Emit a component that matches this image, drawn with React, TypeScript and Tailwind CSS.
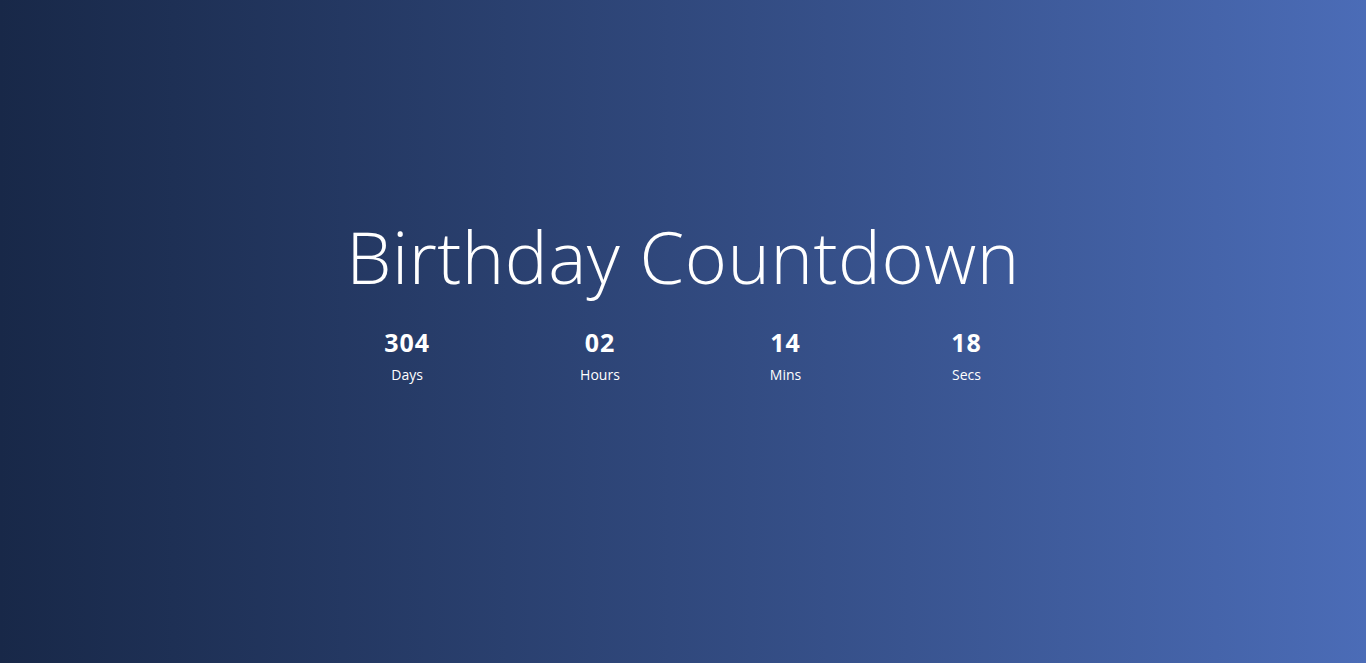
const parts = [
  { value: '304', label: 'Days' },
  { value: '02', label: 'Hours' },
  { value: '14', label: 'Mins' },
  { value: '18', label: 'Secs' },
];

export default function App() {
  return (
    <div
      className="flex h-[663px] w-full flex-col items-center justify-center bg-gradient-to-r from-[#182848] to-[#4b6cb7] pb-[62px] text-white"
      style={{ fontFamily: '"Open Sans", "Liberation Sans", sans-serif' }}
    >
      <h1 className="text-[72px] font-light leading-none tracking-[0.5px]">Birthday Countdown</h1>
      <div className="mt-[38px] flex items-start gap-[150px]">
        {parts.map((p) => (
          <div key={p.label} className="flex flex-col items-center">
            <span className="text-[25px] font-bold leading-none tracking-[1px]">{p.value}</span>
            <span className="mt-[13px] text-[14px] leading-none">{p.label}</span>
          </div>
        ))}
      </div>
    </div>
  );
}
